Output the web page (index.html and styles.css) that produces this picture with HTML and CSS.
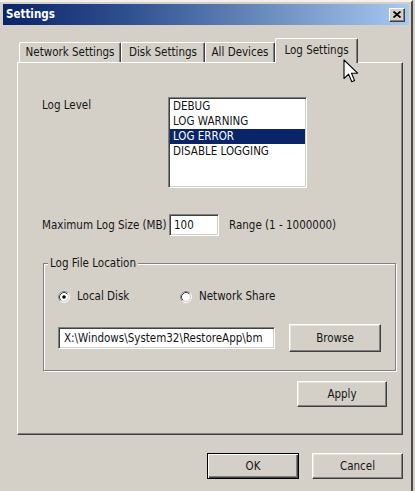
FILE: index.html
```html
<!DOCTYPE html>
<html lang="en">
<head>
<meta charset="utf-8">
<title>Settings</title>
<link rel="stylesheet" href="styles.css">
</head>
<body>
<div class="window">
  <div class="titlebar">
    <span class="title">Settings</span>
    <button class="close" aria-label="Close">
      <svg width="8" height="7" viewBox="0 0 8 7"><path d="M0.5 0.5 L7.5 6.5 M7.5 0.5 L0.5 6.5" stroke="#000" stroke-width="1.7" fill="none"/></svg>
    </button>
  </div>

  <div class="client">
    <div class="tabs">
      <div class="tab tab-network">Network Settings</div>
      <div class="tab tab-disk">Disk Settings</div>
      <div class="tab tab-devices">All Devices</div>
      <div class="tab tab-log active">Log Settings</div>
    </div>

    <div class="page">
      <div class="level-row">
        <span class="label level-label">Log Level</span>
        <ul class="listbox">
          <li>DEBUG</li>
          <li>LOG WARNING</li>
          <li class="selected">LOG ERROR</li>
          <li>DISABLE LOGGING</li>
        </ul>
      </div>

      <div class="size-row">
        <span class="label size-label">Maximum Log Size (MB)</span>
        <div class="textbox size-box">100</div>
        <span class="range">Range (1 - 1000000)</span>
      </div>

      <fieldset class="group">
        <legend>Log File Location</legend>
        <div class="radios">
          <label class="radio radio-local">
            <svg class="radio-dot" width="12" height="12" viewBox="0 0 12 12">
              <circle cx="6" cy="6" r="5.5" fill="none" stroke="#fff"/>
              <path d="M2.11 9.89 A5.5 5.5 0 0 1 9.89 2.11" fill="none" stroke="#808080"/>
              <circle cx="6" cy="6" r="4.5" fill="#fff" stroke="#d4d0c8"/>
              <path d="M2.82 9.18 A4.5 4.5 0 0 1 9.18 2.82" fill="none" stroke="#404040"/>
              <circle cx="6" cy="6" r="1.8" fill="#000"/>
            </svg>
            Local Disk
          </label>
          <label class="radio">
            <svg class="radio-dot" width="12" height="12" viewBox="0 0 12 12">
              <circle cx="6" cy="6" r="5.5" fill="none" stroke="#fff"/>
              <path d="M2.11 9.89 A5.5 5.5 0 0 1 9.89 2.11" fill="none" stroke="#808080"/>
              <circle cx="6" cy="6" r="4.5" fill="#fff" stroke="#d4d0c8"/>
              <path d="M2.82 9.18 A4.5 4.5 0 0 1 9.18 2.82" fill="none" stroke="#404040"/>
            </svg>
            Network Share
          </label>
        </div>
        <div class="path-row">
          <div class="textbox path-box">X:\Windows\System32\RestoreApp\bm</div>
          <button class="btn browse">Browse</button>
        </div>
      </fieldset>

      <div class="apply-row">
        <button class="btn apply">Apply</button>
      </div>
    </div>

    <div class="footer">
      <button class="btn ok default">OK</button>
      <button class="btn cancel">Cancel</button>
    </div>
  </div>

  <svg class="cursor" width="16" height="25" viewBox="0 0 16 25">
    <path d="M1 1 L1 19.5 L5.6 15.2 L8.8 22.8 L11.6 21.6 L8.5 14.2 L14.6 14.2 Z" fill="#fff" stroke="#000" stroke-width="1.1" stroke-linejoin="round"/>
  </svg>
</div>
</body>
</html>
```

FILE: styles.css
```css
body {
  margin: 0;
  background: #d4d0c8;
  font-family: "DejaVu Sans Condensed", "DejaVu Sans", sans-serif;
  font-stretch: condensed;
  font-size: 11.5px;
  line-height: 13px;
  color: #151515;
}

.window {
  position: relative;
  box-sizing: border-box;
  width: 413px;
  height: 491px;
  padding: 2px 2px 0 3px;
  background: #d4d0c8;
  border-top: 2px solid #f2f1ec;
  border-right: 2px solid #4a4a4a;
}

/* caption bar */
.titlebar {
  display: flex;
  align-items: center;
  justify-content: space-between;
  height: 21px;
  padding: 0 4px 0 3px;
  background: linear-gradient(90deg, #0a246a 0%, #2e4f8e 30%, #a6caf0 100%);
}

.title {
  color: #fff;
  font-weight: bold;
}

.close {
  display: flex;
  align-items: center;
  justify-content: center;
  box-sizing: border-box;
  width: 16px;
  height: 14px;
  padding: 0;
  background: #d4d0c8;
  border: 1px solid;
  border-color: #fff #404040 #404040 #fff;
  box-shadow: inset -1px -1px #808080;
}

/* dialog body */
.client {
  padding: 13px 6px 0 14px;
}

.tabs {
  position: relative;
  z-index: 1;
  display: flex;
  align-items: flex-end;
  height: 24px;
  padding-left: 2px;
}

.tab {
  box-sizing: border-box;
  display: flex;
  align-items: center;
  justify-content: center;
  height: 20px;
  background: #d4d0c8;
  border-top: 1px solid #fff;
  border-left: 1px solid #fff;
  border-right: 1px solid #404040;
  box-shadow: inset -1px 0 #808080;
  border-radius: 2px 2px 0 0;
  white-space: nowrap;
}

.tab-network { width: 102px; }
.tab-disk { width: 84px; }
.tab-devices { width: 70px; }
.tab-log { width: 83px; }

.tab.active {
  height: 25px;
  margin-bottom: -1px;
  padding-bottom: 1px;
}

.page {
  box-sizing: border-box;
  height: 373px;
  padding: 34px 14px 0 24px;
  border: 1px solid;
  border-color: #fff #404040 #404040 #fff;
  box-shadow: inset -1px -1px #808080;
}

.label {
  white-space: nowrap;
}

.level-row {
  display: flex;
}

.level-label {
  width: 126px;
  padding-top: 2px;
}

.listbox {
  box-sizing: border-box;
  width: 139px;
  height: 91px;
  margin: 0;
  padding: 1px 1px 0 1px;
  list-style: none;
  background: #fff;
  border: 1px solid;
  border-color: #808080 #fff #fff #808080;
  box-shadow: inset 1px 1px #404040, inset -1px -1px #d4d0c8;
}

.listbox li {
  height: 15px;
  line-height: 15px;
  padding-left: 3px;
  white-space: nowrap;
}

.listbox li.selected {
  background: #0a246a;
  color: #fff;
}

.size-row {
  display: flex;
  align-items: center;
  margin-top: 26px;
}

.size-label {
  width: 127px;
}

.textbox {
  box-sizing: border-box;
  display: flex;
  align-items: center;
  height: 22px;
  padding: 0 4px;
  background: #fff;
  border: 1px solid;
  border-color: #808080 #fff #fff #808080;
  box-shadow: inset 1px 1px #404040, inset -1px -1px #d4d0c8;
  white-space: nowrap;
  overflow: hidden;
}

.size-box {
  width: 50px;
}

.range {
  margin-left: 10px;
  white-space: nowrap;
}

/* etched group box */
.group {
  margin: 21px 0 0 1px;
  padding: 20px 14px 18px 14px;
  border: 1px solid #808080;
  box-shadow: inset 1px 1px #fff, 1px 1px 0 #fff;
}

.group legend {
  margin-left: -10px;
  padding: 0 2px;
  background: #d4d0c8;
}

.radios {
  display: flex;
  align-items: center;
  height: 13px;
}

.radio {
  display: flex;
  align-items: center;
  gap: 7px;
  white-space: nowrap;
}

.radio-local {
  width: 122px;
}

.radio-dot {
  flex: none;
}

.path-row {
  display: flex;
  align-items: center;
  gap: 14px;
  margin-top: 21px;
}

.path-box {
  width: 217px;
  padding-left: 5px;
  padding-right: 2px;
}

.btn {
  box-sizing: border-box;
  height: 26px;
  padding: 0;
  background: #d4d0c8;
  border: 1px solid;
  border-color: #fff #404040 #404040 #fff;
  box-shadow: inset -1px -1px #808080, inset 1px 1px #e6e4de;
  font: inherit;
  color: #151515;
}

.browse {
  width: 92px;
  height: 28px;
}

.apply-row {
  display: flex;
  justify-content: flex-end;
  margin-top: 10px;
}

.apply {
  width: 90px;
  margin-right: 1px;
}

.footer {
  display: flex;
  justify-content: flex-end;
  gap: 13px;
  margin-top: 18px;
}

.ok {
  width: 92px;
}

.cancel {
  width: 91px;
}

.btn.default {
  border: 1px solid #000;
  box-shadow: inset 1px 1px #fff, inset -1px -1px #404040, inset -2px -2px #808080;
}

/* mouse pointer resting over the active tab */
.cursor {
  position: absolute;
  left: 343px;
  top: 57px;
  z-index: 2;
}
```
